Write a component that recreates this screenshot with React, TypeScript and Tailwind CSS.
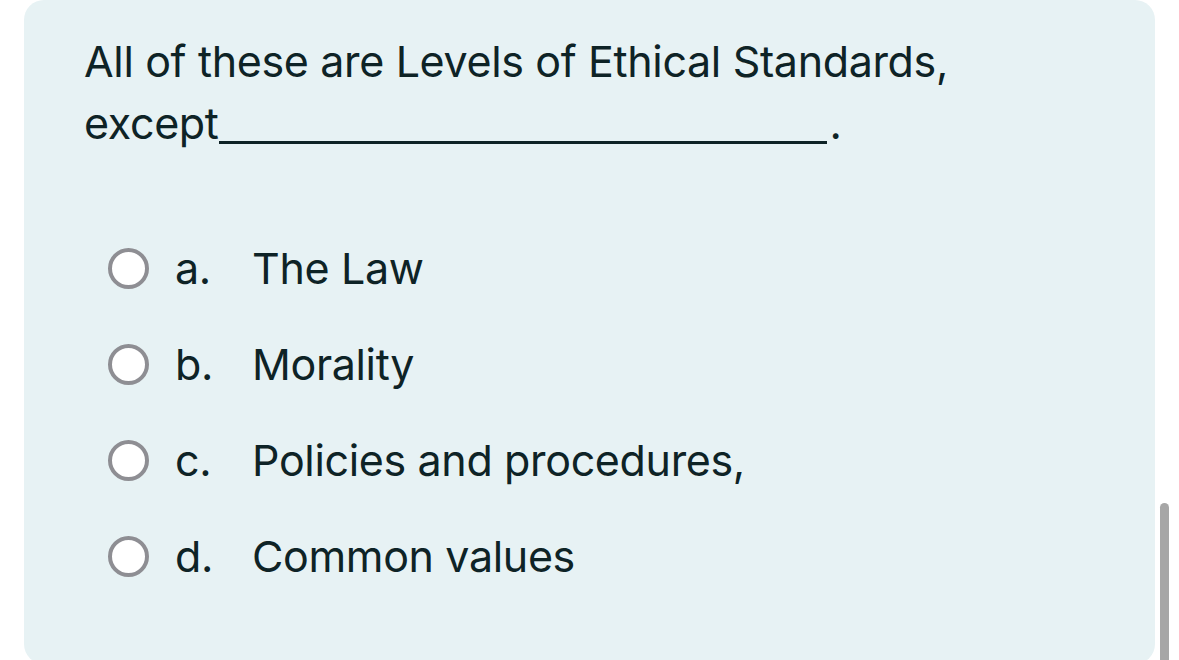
const options = [
  { key: "a.", label: "The Law" },
  { key: "b.", label: "Morality" },
  { key: "c.", label: "Policies and procedures," },
  { key: "d.", label: "Common values" },
]

const App = () => {
  return (
    <div className="relative h-[660px] w-[1179px] overflow-hidden bg-white" style={{ fontFamily: "Inter, 'Noto Sans', sans-serif" }}>
      <div className="ml-[24px] h-[664px] w-[1131px] rounded-[20px] bg-[#e7f2f4] pl-[60px] pt-[30px] text-[#0e2326]">
        <p className="w-[900px] text-[43px] leading-[62px] tracking-[-0.35px]">
          All of these are Levels of Ethical Standards, except
          <span className="mr-[3px] inline-block h-[40px] w-[608px] border-b-[3px] border-[#0e2326] align-[-5px]"></span>.
        </p>
        <div className="mt-[92px] flex flex-col gap-[52px]">
          {options.map((o) => (
            <div key={o.key} className="flex h-[44px] items-center text-[43px] tracking-[-0.35px]">
              <span className="ml-[24px] h-[41px] w-[41px] rounded-full border-[4px] border-[#8e8e93] bg-white"></span>
              <span className="ml-[26px] w-[77px]">{o.key}</span>
              <span>{o.label}</span>
            </div>
          ))}
        </div>
      </div>
      <div className="absolute left-[1160px] top-[503px] h-[170px] w-[9px] rounded-full bg-[#a6a6a6]"></div>
    </div>
  )
}

export default App
